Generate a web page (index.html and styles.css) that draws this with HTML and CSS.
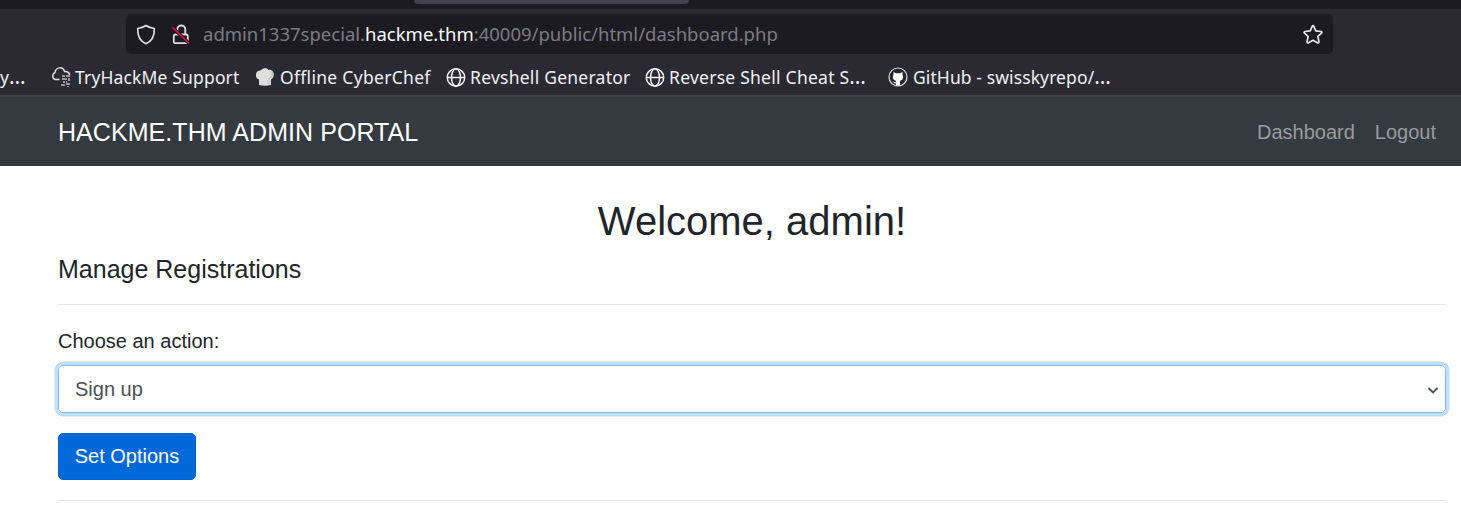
FILE: index.html
```html
<!DOCTYPE html>
<html lang="en">
<head>
<meta charset="utf-8">
<title>Hackme.thm Admin Portal</title>
<link rel="stylesheet" href="styles.css">
</head>
<body>
<header class="chrome">
  <div class="tabs"><div class="tab"></div></div>
  <div class="toolbar">
    <div class="urlbar">
      <svg class="shield" width="20" height="22" viewBox="0 0 20 22"><path d="M10 2.500C12.300 4.200 15.500 5.200 18.300 5.500C18.500 12 16.500 18 10 20.700C3.500 18 1.500 12 1.700 5.500C4.500 5.200 7.700 4.200 10 2.500Z" fill="none" stroke="#dcdce0" stroke-width="1.700" stroke-linejoin="round"/></svg>
      <svg class="lock" width="20" height="22" viewBox="0 0 20 22"><path d="M6.300 9V6.500a4 4 0 0 1 8 0V11" fill="none" stroke="#dcdce0" stroke-width="1.900"/><rect x="2.800" y="11.500" width="14" height="8.700" rx="1.500" fill="none" stroke="#dcdce0" stroke-width="1.800"/><path d="M1.200 4.200L18.200 20.500" stroke="#1c1b22" stroke-width="3.500"/><path d="M1.200 4.200L18.200 20.500" stroke="#e2083f" stroke-width="1.700"/></svg>
      <div class="url">admin1337special.<span class="host">hackme.thm</span>:40009/public/html/dashboard.php</div>
      <svg class="star" width="22" height="22" viewBox="0 0 22 22"><path d="M10.200 3.300Q11 1.800 11.800 3.300L13.800 7.900L19 8.500Q20.600 8.900 19.500 10.200L15.900 13.300L16.900 18.700Q16.900 20.400 15.400 19.700L11 17.300L6.600 19.700Q5.100 20.400 5.100 18.700L6.100 13.300L2.500 10.200Q1.400 8.900 3 8.500L8.200 7.900Z" fill="none" stroke="#e6e6ea" stroke-width="1.700" stroke-linejoin="round"/></svg>
    </div>
  </div>
  <nav class="bookmarks">
    <span class="mark m0"><span>y<span class="dots">…</span></span></span>
    <span class="mark m1"><svg width="22" height="22" viewBox="0 0 22 22"><path d="M9.500 13.500H5A3.800 3.800 0 0 1 5 6.500C6 .5 13 .5 14.500 5.500C18 5 20 7.500 19.500 10" fill="none" stroke="#e0e0e4" stroke-width="1.500"/><g fill="#99989f"><path d="M12 9h3v2h-3zM16 9h4v2h-4zM12 12h5v2h-5zM18 12h2v3h-2zM13 15h2v2h-2zM16 15h1v2h-1zM11 18h4v2h-4zM16 17h4v2h-4zM17 20h2v1h-2z"/></g></svg>TryHackMe Support</span>
    <span class="mark m2"><svg width="20" height="20" viewBox="0 0 20 20"><path d="M4 18V12.500C0 12-.2 4.500 4 3.800C6 3.500 6 3 7 2.300C9 .5 12.500.8 13.500 3C19.500 1.500 20.500 10.500 16 12.500V18Q10 19.500 4 18Z" fill="#dededf"/><path d="M14 17.500V11M15.500 4.500C18.500 5 18 9.500 15 10.500" fill="none" stroke="#c4c4c6" stroke-width="1.500"/></svg>Offline CyberChef</span>
    <span class="mark m3"><svg width="20" height="20" viewBox="0 0 20 20"><g fill="none" stroke="#f2f2f5" stroke-width="1.500"><circle cx="10" cy="10.500" r="8.700"/><ellipse cx="10" cy="10.500" rx="4.500" ry="8.700"/><path d="M1.500 10.500H18.500"/></g></svg>Revshell Generator</span>
    <span class="mark m4"><svg width="20" height="20" viewBox="0 0 20 20"><g fill="none" stroke="#f2f2f5" stroke-width="1.500"><circle cx="10" cy="10.500" r="8.700"/><ellipse cx="10" cy="10.500" rx="4.500" ry="8.700"/><path d="M1.500 10.500H18.500"/></g></svg><span>Reverse Shell Cheat S<span class="dots">…</span></span></span>
    <span class="mark m5"><svg width="20" height="20" viewBox="0 0 20 20"><circle cx="10" cy="10" r="9" fill="#24292e" stroke="#dededf" stroke-width="1.200"/><path d="M5.500 5L8 6.200H12L14.500 5V8C16 11 14.500 13.200 12 13.700V18.500H8V16.500C6 16.500 5.800 15 4.800 14.200C6 14.200 6.500 15.500 8 15V13.700C5.500 13.200 4 11 5.500 8Z" fill="#fff"/></svg><span>GitHub - swisskyrepo/<span class="dots">…</span></span></span>
  </nav>
</header>
<nav class="navbar">
  <a class="brand">HACKME.THM ADMIN PORTAL</a>
  <div class="links"><a>Dashboard</a><a>Logout</a></div>
</nav>
<main class="content">
  <h1>Welcome, admin!</h1>
  <h5>Manage Registrations</h5>
  <hr>
  <label class="label">Choose an action:</label>
  <div class="select"><span>Sign up</span><svg width="12" height="10" viewBox="0 0 12 10"><path d="M1.500 3L6 7.500L10.500 3" fill="none" stroke="#495057" stroke-width="1.800"/></svg></div>
  <button class="button">Set Options</button>
  <hr class="last">
</main>
</body>
</html>
```
FILE: styles.css
```css
* { box-sizing: border-box; }
body { margin: 0; height: 520px; overflow: hidden; background: #fff; color: #212529; font-family: "Liberation Sans", Arial, sans-serif; font-size: 20px; }
svg { flex: none; display: block; }
.chrome { height: 97px; background: #2b2a33; border-bottom: 2px solid #42414d; font-family: "Noto Sans", sans-serif; }
.tabs { height: 9px; background: #1c1b22; padding-left: 414px; }
.tab { width: 275px; height: 4px; background: #42414d; border-radius: 0 0 5px 5px; }
.toolbar { height: 50px; padding: 5px 128px 5px 126px; }
.urlbar { height: 40px; background: #1c1b22; border-radius: 5px; display: flex; align-items: center; padding: 0 9px 0 10px; }
.lock { margin-left: 15px; }
.url { margin-left: 12px; flex: 1; color: #7c7b82; font-size: 18.500px; line-height: 24px; white-space: nowrap; }
.host { color: #fbfbfe; }
.bookmarks { height: 36px; display: flex; color: #f0f0f4; font-size: 17.500px; }
.mark { display: flex; align-items: center; gap: 4px; height: 36px; line-height: 24px; white-space: nowrap; flex: none; }
.dots { font-size: 21px; line-height: 20px; }
.m0 { width: 50px; }
.m1 { width: 205px; letter-spacing: 0.150px; gap: 3px; }
.m2 { width: 191px; letter-spacing: 0.300px; gap: 5px; }
.m3 { width: 199px; letter-spacing: 0.250px; }
.m4 { width: 243px; letter-spacing: 0.250px; }
.m5 { letter-spacing: 0.100px; gap: 5px; }
.navbar { height: 69px; background: #343a40; display: flex; justify-content: space-between; align-items: center; padding: 2px 25px 0 58px; }
.brand { color: #fff; font-size: 25px; letter-spacing: 0.060px; }
.links { display: flex; gap: 20px; color: #999c9f; }
.content { padding: 30px 15px 0 58px; }
h1, h5 { margin: 0; font-weight: 400; }
h1 { font-size: 40px; line-height: 48px; padding-top: 1px; text-align: center; }
h5 { font-size: 25px; line-height: 30px; margin-top: 9px; }
hr { margin: 20px 0; border: 0; border-top: 1px solid #e5e5e5; }
.label { display: block; line-height: 30px; padding-top: 1px; margin-bottom: 9px; }
.select { height: 48px; border: 1px solid #80bdff; border-radius: 5px; box-shadow: 0 0 0 3.500px #bfdeff; color: #495057; display: flex; align-items: center; justify-content: space-between; padding: 1px 6px 0 16px; }
.button { display: block; margin-top: 20px; width: 138px; height: 47px; padding: 0; border: 1px solid #0062cc; border-radius: 5px; background: #0069d9; color: #fff; font: inherit; }
```
